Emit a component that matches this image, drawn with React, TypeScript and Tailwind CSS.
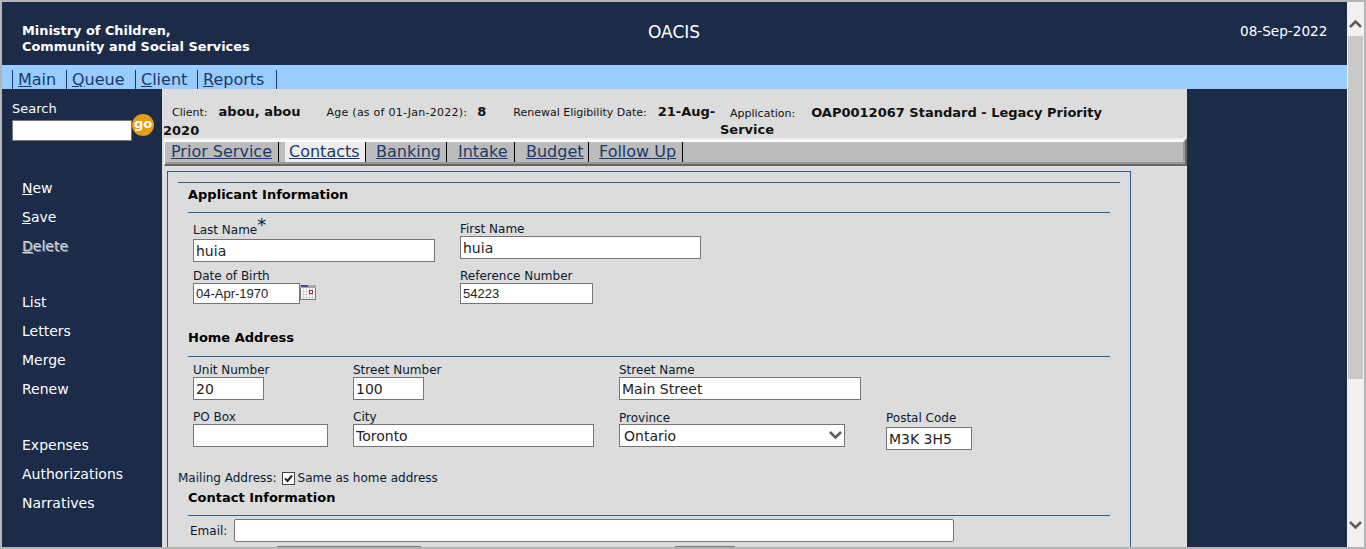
const Label = ({ children, className = "" }: { children: React.ReactNode; className?: string }) => (
  <div className={`text-[12px] leading-[14px] text-[#0b1a33] ${className}`}>{children}</div>
);

const Field = ({ value = "", className = "" }: { value?: string; className?: string }) => (
  <input
    readOnly
    value={value}
    className={`block border border-[#767676] bg-white pl-[2px] text-[#222] outline-none ${className}`}
  />
);

const Heading = ({ children, className = "" }: { children: React.ReactNode; className?: string }) => (
  <div className={`text-[13px] font-bold leading-[16px] text-black ${className}`}>{children}</div>
);

const MenuGroup = ({ items, className = "" }: { items: string[]; className?: string }) => (
  <div className={`flex flex-col gap-[11px] ${className}`}>
    {items.map((item) => (
      <div key={item} className="text-[14px] leading-[18px] text-white">
        {item}
      </div>
    ))}
  </div>
);

const AccessItem = ({ first, rest, disabled }: { first: string; rest: string; disabled?: boolean }) => (
  <div
    className={`text-[14px] leading-[18px] ${disabled ? "text-[#d4d7dd] [text-shadow:1px_1px_0_#7d8494]" : "text-white"}`}
  >
    <u>{first}</u>
    {rest}
  </div>
);

const Chevron = ({ up }: { up?: boolean }) => (
  <svg width="13" height="9" viewBox="0 0 13 9" className="block">
    <path
      d={up ? "M1 8 L6.5 2.5 L12 8" : "M1 1 L6.5 6.5 L12 1"}
      fill="none"
      stroke="#5d5d5d"
      strokeWidth="2.6"
    />
  </svg>
);

const navItems = [
  ["M", "ain", "w-[54px]"],
  ["Q", "ueue", "w-[69px]"],
  ["C", "lient", "w-[62px]"],
  ["R", "eports", "w-[79px]"],
];

const tabs = [
  { name: "Prior Service", cls: "w-[114px] pl-[6px]" },
  { name: "Contacts", cls: "ml-[6px] w-[81px] bg-[#ededed] pl-[4px]" },
  { name: "Banking", cls: "w-[81px] pl-[10px]" },
  { name: "Intake", cls: "w-[68px] pl-[11px]" },
  { name: "Budget", cls: "w-[74px] pl-[11px]" },
  { name: "Follow Up", cls: "w-[94px] pl-[10px]" },
];

export default function App() {
  return (
    <div className="flex h-[549px] w-[1366px] overflow-hidden border-2 border-[#b5b5b5] bg-[#1c2b47] font-['DejaVu_Sans',sans-serif]">
      <div className="w-[1345px] shrink-0">
        {/* header */}
        <div className="flex h-[63px] text-white">
          <div className="w-[640px] pl-[20px] pt-[21px] text-[12.9px] font-bold leading-[16px]">
            Ministry of Children,
            <br />
            Community and Social Services
          </div>
          <div className="w-[598px] pl-[6px] pt-[20px] text-[17px] leading-[20px]">OACIS</div>
          <div className="pt-[21px] text-[13.6px] leading-[16px]">08-Sep-2022</div>
        </div>

        {/* top nav */}
        <div className="flex h-[24px] items-end bg-[#99ccff] pl-[10px] text-[16px] leading-[19px] text-[#1a3a6b]">
          {navItems.map(([first, rest, w]) => (
            <div key={first} className={`${w} h-[19px] border-l border-[#1a3a6b] pl-[5px]`}>
              <u>{first}</u>
              {rest}
            </div>
          ))}
          <div className="h-[19px] border-l border-[#1a3a6b]" />
        </div>

        <div className="flex">
          {/* left menu */}
          <div className="w-[160px] shrink-0 pl-[10px] pt-[12px]">
            <div className="text-[13px] leading-[16px] text-white">Search</div>
            <div className="relative mt-[3px] flex">
              <input readOnly className="h-[21px] w-[120px] border border-[#767676] bg-white" />
              <div className="absolute left-[120px] top-[-6px] flex h-[22px] w-[22px] items-center justify-center rounded-full bg-[#e89c14] pb-[3px] text-[13px] font-bold text-white">
                go
              </div>
            </div>
            <div className="pl-[10px] pt-[38px]">
              <div className="flex flex-col gap-[11px]">
                <AccessItem first="N" rest="ew" />
                <AccessItem first="S" rest="ave" />
                <AccessItem first="D" rest="elete" disabled />
              </div>
              <MenuGroup className="mt-[38px]" items={["List", "Letters", "Merge", "Renew"]} />
              <MenuGroup className="mt-[38px]" items={["Expenses", "Authorizations", "Narratives"]} />
            </div>
          </div>

          {/* content */}
          <div className="h-[500px] w-[1025px] shrink-0 bg-[#dcdcdc]">
            <div className="h-[49px] pl-[1px] pt-[14px] text-[11px] leading-[17px] text-[#111]">
              <div className="flex items-start">
                <div className="w-[557px]">
                  <span className="pl-[9px]">Client:</span>
                  <b className="ml-[11px] text-[13px]">abou, abou</b>
                  <span className="ml-[26px] tracking-[0.25px]">Age (as of 01-Jan-2022):</span>
                  <b className="ml-[10px] text-[13px]">8</b>
                  <span className="ml-[27px]">Renewal Eligibility Date:</span>
                  <b className="ml-[11px] text-[13px]">21-Aug-</b>
                  <div className="mt-px text-[13px] font-bold">2020</div>
                </div>
                <div className="w-[400px] pt-[1px]">
                  <span className="pl-[10px]">Application:</span>
                  <b className="ml-[16px] text-[13px]">OAP0012067 Standard - Legacy Priority</b>
                  <div className="mt-[-1px] text-[13px] font-bold">Service</div>
                </div>
              </div>
            </div>

            {/* tabs */}
            <div className="ml-[2px] h-[28px] border-y-2 border-r-2 border-l border-t-[#f0f0f0] border-r-[#666] border-b-[#666] border-l-white">
              <div className="h-[24px] border-y-2 border-r-2 border-t-white border-r-[#999] border-b-[#999] bg-[#bcbcbc]">
                <div className="flex h-[20px] text-[16px] leading-[20px] text-[#1a3a6b]">
                  {tabs.map((t) => (
                    <div key={t.name} className={`${t.cls} shrink-0 border-r border-black`}>
                      <span className="underline">{t.name}</span>
                    </div>
                  ))}
                </div>
              </div>
            </div>

            {/* form box */}
            <div className="ml-[5px] mt-[5px] h-[400px] w-[964px] border-x border-t border-[#2f5f8f] pl-[10px] pt-[10px]">
              <div className="w-[942px] border-t border-[#2f5f8f] px-[10px]">
                <Heading className="pt-[4px]">Applicant Information</Heading>
                <div className="mt-[9px] border-t border-[#2f5f8f]" />

                <div className="flex pl-[5px]">
                  <div className="w-[267px]">
                    <Label className="pt-[10px]">
                      Last Name<span className="relative top-[-3px] text-[18px] leading-[10px]">*</span>
                    </Label>
                    <Field value="huia" className="mt-[2px] h-[23px] w-[242px] text-[14px]" />
                    <Label className="mt-[7px]">Date of Birth</Label>
                    <div className="flex">
                      <Field
                        value="04-Apr-1970"
                        className="h-[21px] w-[107px] font-['Liberation_Sans',sans-serif] text-[13px]"
                      />
                      <svg width="16" height="15" viewBox="0 0 16 15" className="mt-[2px]">
                        <rect x="0" y="0" width="16" height="15" fill="#777" />
                        <rect x="0" y="0" width="16" height="3" fill="#a8a8a8" />
                        <rect x="1" y="0" width="7" height="2" fill="#4a4a9a" />
                        <rect x="1" y="3" width="14" height="11" fill="#fff" />
                        <path d="M1 6.5H15M1 9.5H15M1 12.5H15M3.5 3V14M6.5 3V14M9.5 3V14M12.5 3V14" stroke="#d4d4d4" />
                        <rect x="9.5" y="5.5" width="3" height="3" fill="#fff" stroke="#a03030" />
                      </svg>
                    </div>
                  </div>
                  <div className="w-[300px]">
                    <Label className="pt-[9px]">First Name</Label>
                    <Field value="huia" className="h-[23px] w-[241px] text-[14px]" />
                    <Label className="mt-[10px]">Reference Number</Label>
                    <Field
                      value="54223"
                      className="h-[21px] w-[133px] font-['Liberation_Sans',sans-serif] text-[13px]"
                    />
                  </div>
                </div>

                <Heading className="mt-[26px]">Home Address</Heading>
                <div className="mt-[10px] border-t border-[#2f5f8f]" />

                <div className="flex pl-[5px]">
                  <div className="w-[160px]">
                    <Label className="pt-[6px]">Unit Number</Label>
                    <Field value="20" className="h-[23px] w-[71px] text-[14px]" />
                    <Label className="mt-[10px]">PO Box</Label>
                    <Field className="h-[23px] w-[135px] text-[14px]" />
                  </div>
                  <div className="w-[266px]">
                    <Label className="pt-[6px]">Street Number</Label>
                    <Field value="100" className="h-[23px] w-[71px] text-[14px]" />
                    <Label className="mt-[10px]">City</Label>
                    <Field value="Toronto" className="h-[23px] w-[241px] text-[14px]" />
                  </div>
                  <div className="w-[267px]">
                    <Label className="pt-[6px]">Street Name</Label>
                    <Field value="Main Street" className="h-[23px] w-[242px] text-[14px]" />
                    <Label className="mt-[11px]">Province</Label>
                    <div className="relative mt-[-1px] w-[226px]">
                      <select className="block h-[23px] w-[226px] appearance-none border border-[#767676] bg-white pl-[4px] pt-px text-[14px] text-[#222] outline-none">
                        <option>Ontario</option>
                      </select>
                      <div className="absolute right-[3px] top-[7px]">
                        <Chevron />
                      </div>
                    </div>
                  </div>
                  <div className="pt-[54px]">
                    <Label>Postal Code</Label>
                    <Field value="M3K 3H5" className="mt-[2px] h-[23px] w-[86px] text-[14px]" />
                  </div>
                </div>
              </div>

              <div className="mt-[20px] flex h-[16px] items-center text-[12px] text-[#0b1a33]">
                <span>Mailing Address:</span>
                <span className="ml-[5px] flex h-[13px] w-[13px] items-center justify-center border border-[#444] bg-white">
                  <svg width="11" height="11" viewBox="0 0 11 11">
                    <path d="M2 5.5 L4.5 8 L9 2.5" fill="none" stroke="#222" strokeWidth="2" />
                  </svg>
                </span>
                <span className="ml-[3px]">Same as home address</span>
              </div>

              <div className="w-[942px] px-[10px]">
                <Heading className="mt-[4px]">Contact Information</Heading>
                <div className="mt-[9px] border-t border-[#2f5f8f]" />
                <div className="mt-[3px] flex items-center pl-[2px]">
                  <Label className="w-[44px]">Email:</Label>
                  <Field className="h-[23px] w-[720px] rounded-[2px] text-[14px]" />
                </div>
                <div className="mt-[4px] flex pl-[89px]">
                  <Field className="h-[23px] w-[144px] text-[14px]" />
                  <Field className="ml-[254px] h-[23px] w-[60px] text-[14px]" />
                </div>
              </div>
            </div>
          </div>
        </div>
      </div>

      {/* scrollbar */}
      <div className="flex h-full w-[17px] shrink-0 flex-col bg-[#f1f1f1]">
        <div className="flex h-[34px] items-start justify-center pt-[17px]">
          <Chevron up />
        </div>
        <div className="mx-px h-[343px] bg-[#c9c9c9]" />
        <div className="flex-1" />
        <div className="flex h-[26px] items-start justify-center">
          <Chevron />
        </div>
      </div>
    </div>
  );
}
